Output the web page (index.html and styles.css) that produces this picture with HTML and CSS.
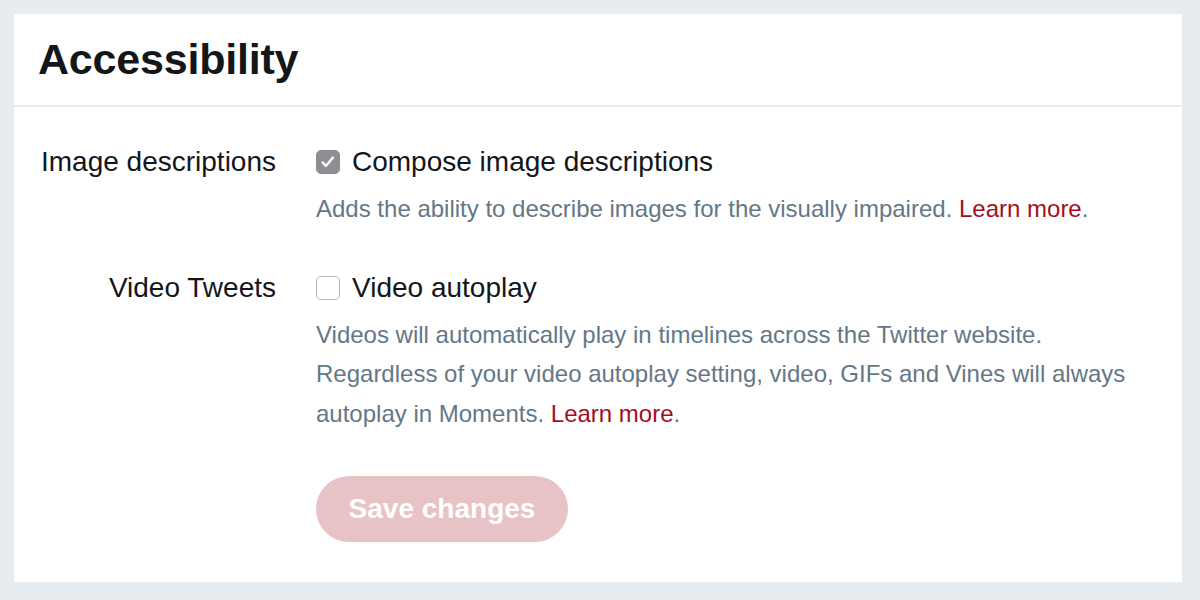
FILE: index.html
```html
<!DOCTYPE html>
<html>
<head>
<meta charset="utf-8">
<link rel="stylesheet" href="styles.css">
</head>
<body>
<div class="card">
  <div class="header"><h1>Accessibility</h1></div>
  <div class="content">
    <div class="row">
      <div class="label">Image descriptions</div>
      <div class="control">
        <label class="check"><span class="box checked"><svg viewBox="0 0 24 24" width="20" height="20"><path d="M5.5 12.5l4 4.2 8.5-10" fill="none" stroke="#fff" stroke-width="2.8" stroke-linecap="round" stroke-linejoin="round"/></svg></span>Compose image descriptions</label>
        <p class="desc">Adds the ability to describe images for the visually impaired. <a>Learn more</a>.</p>
      </div>
    </div>
    <div class="row">
      <div class="label">Video Tweets</div>
      <div class="control">
        <label class="check"><span class="box"></span>Video autoplay</label>
        <p class="desc">Videos will automatically play in timelines across the Twitter website. Regardless of your video autoplay setting, video, GIFs and Vines will always autoplay in Moments. <a>Learn more</a>.</p>
      </div>
    </div>
    <div class="row">
      <div class="label"></div>
      <div class="control"><button class="save">Save changes</button></div>
    </div>
  </div>
</div>
</body>
</html>
```
FILE: styles.css
```css
html, body { margin: 0; padding: 0; }
body {
  background: #e6ecf0;
  font-family: "Liberation Sans", Arial, sans-serif;
  padding: 14px 18px 18px 14px;
  height: 600px;
  box-sizing: border-box;
}
.card {
  background: #fff;
  height: 568px;
}
.header {
  height: 93px;
  border-bottom: 2px solid #e6ecf0;
  box-sizing: border-box;
  padding: 0 24px;
  display: flex;
  align-items: center;
}
h1 {
  margin: 0;
  font-size: 43px;
  font-weight: bold;
  color: #14171a;
  letter-spacing: -0.2px;
}
.content {
  padding-top: 38px;
}
.row {
  display: flex;
  margin-bottom: 42px;
}
.label {
  width: 238px;
  padding-left: 24px;
  text-align: right;
  font-size: 28px;
  color: #14171a;
  line-height: 34px;
  flex: none;
}
.control {
  margin-left: 40px;
  width: 830px;
  flex: none;
}
.check {
  display: flex;
  align-items: center;
  font-size: 28px;
  line-height: 34px;
  color: #14171a;
}
.box {
  width: 24px;
  height: 24px;
  border: 1.5px solid #b8b8bc;
  border-radius: 5px;
  margin-right: 12px;
  display: flex;
  align-items: center;
  justify-content: center;
  box-sizing: border-box;
  flex: none;
}
.box.checked {
  background: #8e8e93;
  border-color: #8e8e93;
}
.desc {
  margin: 10px 0 0;
  font-size: 24px;
  line-height: 39.5px;
  color: #657786;
}
.desc a { color: #a30e1f; }
.save {
  margin-top: 1px;
  background: #e8c3c6;
  color: #fff;
  border: none;
  border-radius: 40px;
  font-family: "Liberation Sans", Arial, sans-serif;
  font-weight: bold;
  font-size: 28px;
  width: 252px;
  height: 66px;
}
```
